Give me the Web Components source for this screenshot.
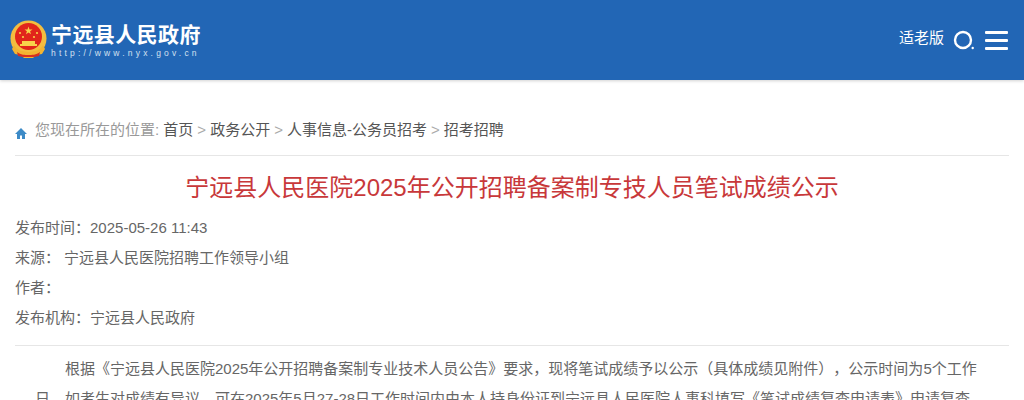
<!DOCTYPE html>
<html lang="zh-CN">
<head>
<meta charset="utf-8">
<title>宁远县人民政府</title>
<style>
html, body { margin: 0; padding: 0; background: #fff; overflow: hidden; height: 400px; }
body { font-family: "Liberation Sans", "Noto Sans CJK SC", sans-serif; font-size: 15px; color: #666; text-spacing-trim: space-all; }
</style>
</head>
<body>
<site-header></site-header>
<page-content>
  <bread-crumb>
    <a>首页</a><a>政务公开</a><a>人事信息-公务员招考</a><a>招考招聘</a>
  </bread-crumb>
  <article-view heading="宁远县人民医院2025年公开招聘备案制专技人员笔试成绩公示">
    <meta-row slot="meta" label="发布时间：">2025-05-26 11:43</meta-row>
    <meta-row slot="meta" label="来源：" gap="4">宁远县人民医院招聘工作领导小组</meta-row>
    <meta-row slot="meta" label="作者："></meta-row>
    <meta-row slot="meta" label="发布机构：">宁远县人民政府</meta-row>
    <p class="para">根据《宁远县人民医院2025年公开招聘备案制专业技术人员公告》要求，现将笔试成绩予以公示（具体成绩见附件），公示时间为5个工作日。如考生对成绩有异议，可在2025年5月27-28日工作时间内由本人持身份证到宁远县人民医院人事科填写《笔试成绩复查申请表》申请复查</p>
  </article-view>
</page-content>

<script>
class SiteHeader extends HTMLElement {
    constructor() {
        super();
        this.attachShadow({mode: "open"}).innerHTML = `
        <style>
            :host { display: flex; height: 80px; background: #2266b5; box-shadow: 0 1px 3px rgba(0,0,0,.18); justify-content: space-between; align-items: center; color: #fff; position: relative; }
            .logo { display: flex; align-items: center; gap: 4px; margin-left: 10px; }
            .names { display: flex; flex-direction: column; padding-top: 2px; }
            .name { font-size: 21px; font-weight: 700; line-height: 24px; letter-spacing: .4px; white-space: nowrap; }
            .url { font-size: 8.5px; letter-spacing: 3.2px; line-height: 12px; color: #d3e0f0; white-space: nowrap; }
            .tools { display: flex; align-items: center; margin-right: 16px; }
            .old { font-size: 15px; margin-right: 9px; margin-top: -7px; }
            .search { margin-right: 11px; display: block; }
            .menu { display: block; }
        </style>
        <div class="logo">
            <svg width="37" height="40" viewBox="0 0 37 40">
                <circle cx="18.500" cy="18.500" r="18" fill="#f3bd3f"/>
                <circle cx="18.500" cy="16.500" r="13.500" fill="#e1251b"/>
                <path d="M18.500 6.500l1 3 3-.1-2.400 1.800.9 3-2.500-1.800-2.500 1.800.9-3-2.400-1.800 3 .1z" fill="#f8d24a"/>
                <circle cx="10" cy="13" r="1.100" fill="#f8d24a"/><circle cx="27" cy="13" r="1.100" fill="#f8d24a"/>
                <circle cx="13" cy="17" r="1.100" fill="#f8d24a"/><circle cx="24" cy="17" r="1.100" fill="#f8d24a"/>
                <path d="M10 26v-2h2v-3h13v3h2v2z" fill="#f8d24a"/>
                <path d="M4 25c3 6 8 6 14.500 7 6.500-1 11.500-1 14.500-7l2 4-3 5-6 1-3 3h-9l-3-3-6-1-3-5z" fill="#f2b431"/>
                <path d="M7 32c4 3 8 3 11.500 3s7.500 0 11.500-3l-1 4-5 1h-11l-5-1z" fill="#d8301f"/>
            </svg>
            <div class="names">
                <div class="name">宁远县人民政府</div>
                <div class="url">http://www.nyx.gov.cn</div>
            </div>
        </div>
        <div class="tools">
            <span class="old">适老版</span>
            <svg class="search" width="21" height="21" viewBox="0 0 21 21" fill="none">
                <circle cx="10" cy="10" r="8" stroke="#fff" stroke-width="2.400"/>
                <circle cx="19.700" cy="18" r="1.200" fill="#fff"/>
            </svg>
            <svg class="menu" width="23" height="19" viewBox="0 0 23 19" fill="#fff">
                <rect width="23" height="3" y="0" rx="1"/>
                <rect width="23" height="3" y="8" rx="1"/>
                <rect width="23" height="3" y="16" rx="1"/>
            </svg>
        </div>`;
    }
}

class PageContent extends HTMLElement {
    constructor() {
        super();
        this.attachShadow({mode: "open"}).innerHTML = `
        <style>
            :host { display: block; padding: 0 15px; }
        </style>
        <slot></slot>`;
    }
}

class BreadCrumb extends HTMLElement {
    constructor() {
        super();
        const links = [...this.querySelectorAll("a")].map(a => a.textContent);
        const gaps = [4, 4, 4];
        let html = "";
        links.forEach((t, i) => {
            if (i > 0) html += `<i style="margin:0 ${gaps[i - 1]}px 0 4px">&gt;</i>`;
            html += `<b>${t}</b>`;
        });
        this.attachShadow({mode: "open"}).innerHTML = `
        <style>
            :host { display: flex; align-items: flex-start; margin-top: 30px; height: 45px; box-sizing: content-box; border-bottom: 1px solid #e6e6e6; font-size: 15px; color: #999; white-space: nowrap; }
            svg { margin: 18px 8px 0 0; display: block; }
            .trail { display: block; line-height: 20px; padding-top: 10px; }
            b { font-weight: 400; color: #555; }
            i { font-style: normal; color: #aaa; }
        </style>
        <svg width="12" height="11" viewBox="0 0 12 11" fill="#3d8bc7"><path d="M6 0L0 6h2v5h3V7.500h2V11h3V6h2z"/></svg>
        <span class="trail">您现在所在的位置: ${html}</span>`;
    }
}

class ArticleView extends HTMLElement {
    constructor() {
        super();
        this.attachShadow({mode: "open"}).innerHTML = `
        <style>
            :host { display: block; }
            h1 { margin: 0; font-size: 24px; font-weight: 400; line-height: 32px; padding-top: 16px; text-align: center; color: #c8383a; }
            .meta { padding-top: 9px; padding-bottom: 12px; border-bottom: 1px solid #e6e6e6; }
            .body { padding: 8px 28px 0 20px; }
            ::slotted(p) { margin: 0; font-size: 15px; line-height: 30px; text-indent: 30px; color: #666; }
        </style>
        <h1>${this.getAttribute("heading")}</h1>
        <div class="meta"><slot name="meta"></slot></div>
        <div class="body"><slot></slot></div>`;
    }
}

class MetaRow extends HTMLElement {
    constructor() {
        super();
        this.attachShadow({mode: "open"}).innerHTML = `
        <style>
            :host { display: flex; height: 30px; line-height: 30px; font-size: 15px; color: #666; white-space: nowrap; }
            span { margin-right: ${this.getAttribute("gap") || 0}px; }
        </style>
        <span>${this.getAttribute("label")}</span><div><slot></slot></div>`;
    }
}

customElements.define("site-header", SiteHeader);
customElements.define("page-content", PageContent);
customElements.define("bread-crumb", BreadCrumb);
customElements.define("article-view", ArticleView);
customElements.define("meta-row", MetaRow);
</script>
</body>
</html>
